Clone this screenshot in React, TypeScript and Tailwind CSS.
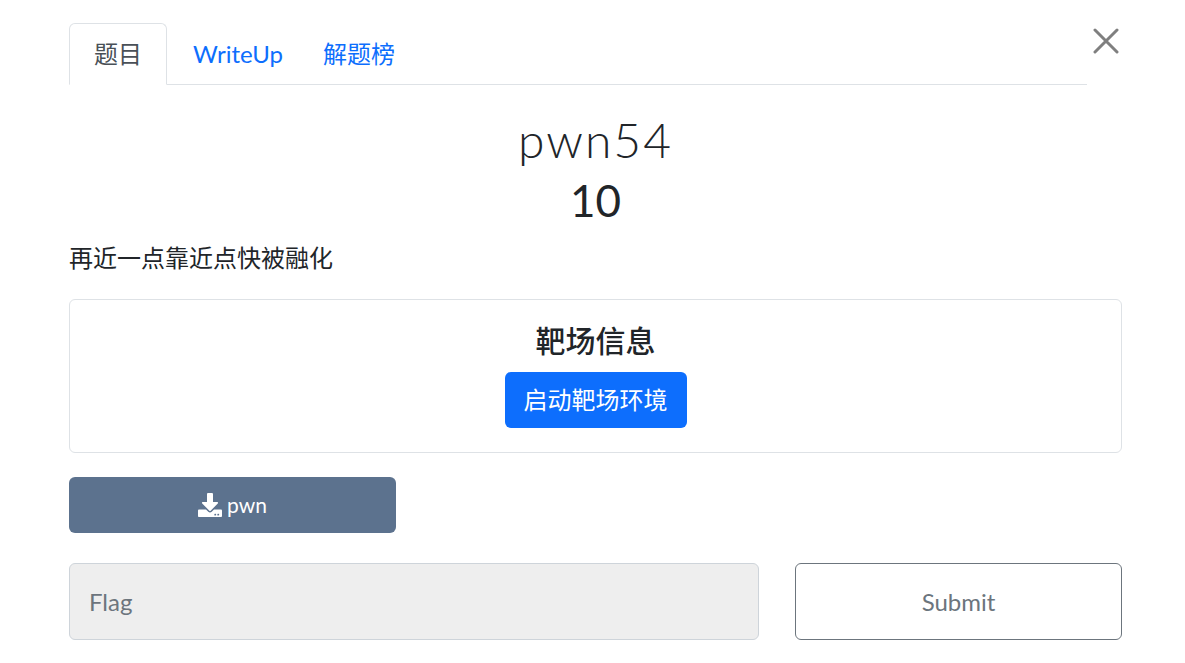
import { FaDownload } from "react-icons/fa";

const font = "font-['Lato','Noto_Sans_CJK_SC',sans-serif]";

export default function App() {
  return (
    <div className={`${font} relative min-h-[663px] bg-white text-[#212529] text-2xl`}>
      <button className="absolute right-[66px] top-[28px] text-[#7f7f7f]">
        <svg width="26" height="26" viewBox="0 0 26 26" fill="none" stroke="currentColor" strokeWidth="3" strokeLinecap="round">
          <path d="M2 2 L24 24 M24 2 L2 24" />
        </svg>
      </button>

      <div className="flex flex-col pl-[69px] pr-[63px] pt-[23px]">
        <ul className="mr-[35px] flex border-b border-[#dee2e6]">
          <li className="-mb-px flex h-[62px] w-[98px] items-center justify-center rounded-t-md border border-[#dee2e6] border-b-white text-[#495057]">
            题目
          </li>
          <li className="flex h-[61px] w-[142px] items-center justify-center text-[#0d6efd]">WriteUp</li>
          <li className="flex h-[61px] w-[100px] items-center justify-center text-[#0d6efd]">解题榜</li>
        </ul>

        <h1 className="mt-[26px] text-center text-[48px] leading-[58px] font-light tracking-[2px]">pwn54</h1>
        <h2 className="mt-[2px] text-center text-[44px] leading-[58px] font-normal">10</h2>
        <p className="mt-[11px] leading-[36px]">再近一点靠近点快被融化</p>

        <div className="mt-[23px] flex h-[154px] flex-col items-center rounded-md border border-[#dee2e6] pt-[22px]">
          <h5 className="text-[30px] leading-[36px] font-medium">靶场信息</h5>
          <button className="mt-[14px] flex h-[56px] w-[182px] items-center justify-center rounded-md bg-[#0d6efd] text-white">
            启动靶场环境
          </button>
        </div>

        <button className="mt-6 flex h-[56px] w-[327px] items-center justify-center gap-[5px] rounded-md bg-[#5c728e] text-[21px] text-white">
          <FaDownload className="size-6" />
          pwn
        </button>

        <div className="mt-[30px] flex justify-between">
          <div className="flex h-[77px] w-[690px] items-center rounded-md border border-[#ced4da] bg-[#eeeeee] px-[19px] text-[#6c757d]">
            Flag
          </div>
          <button className="h-[77px] w-[327px] rounded-md border border-[#6c757d] text-[#6c757d]">Submit</button>
        </div>
      </div>
    </div>
  );
}
